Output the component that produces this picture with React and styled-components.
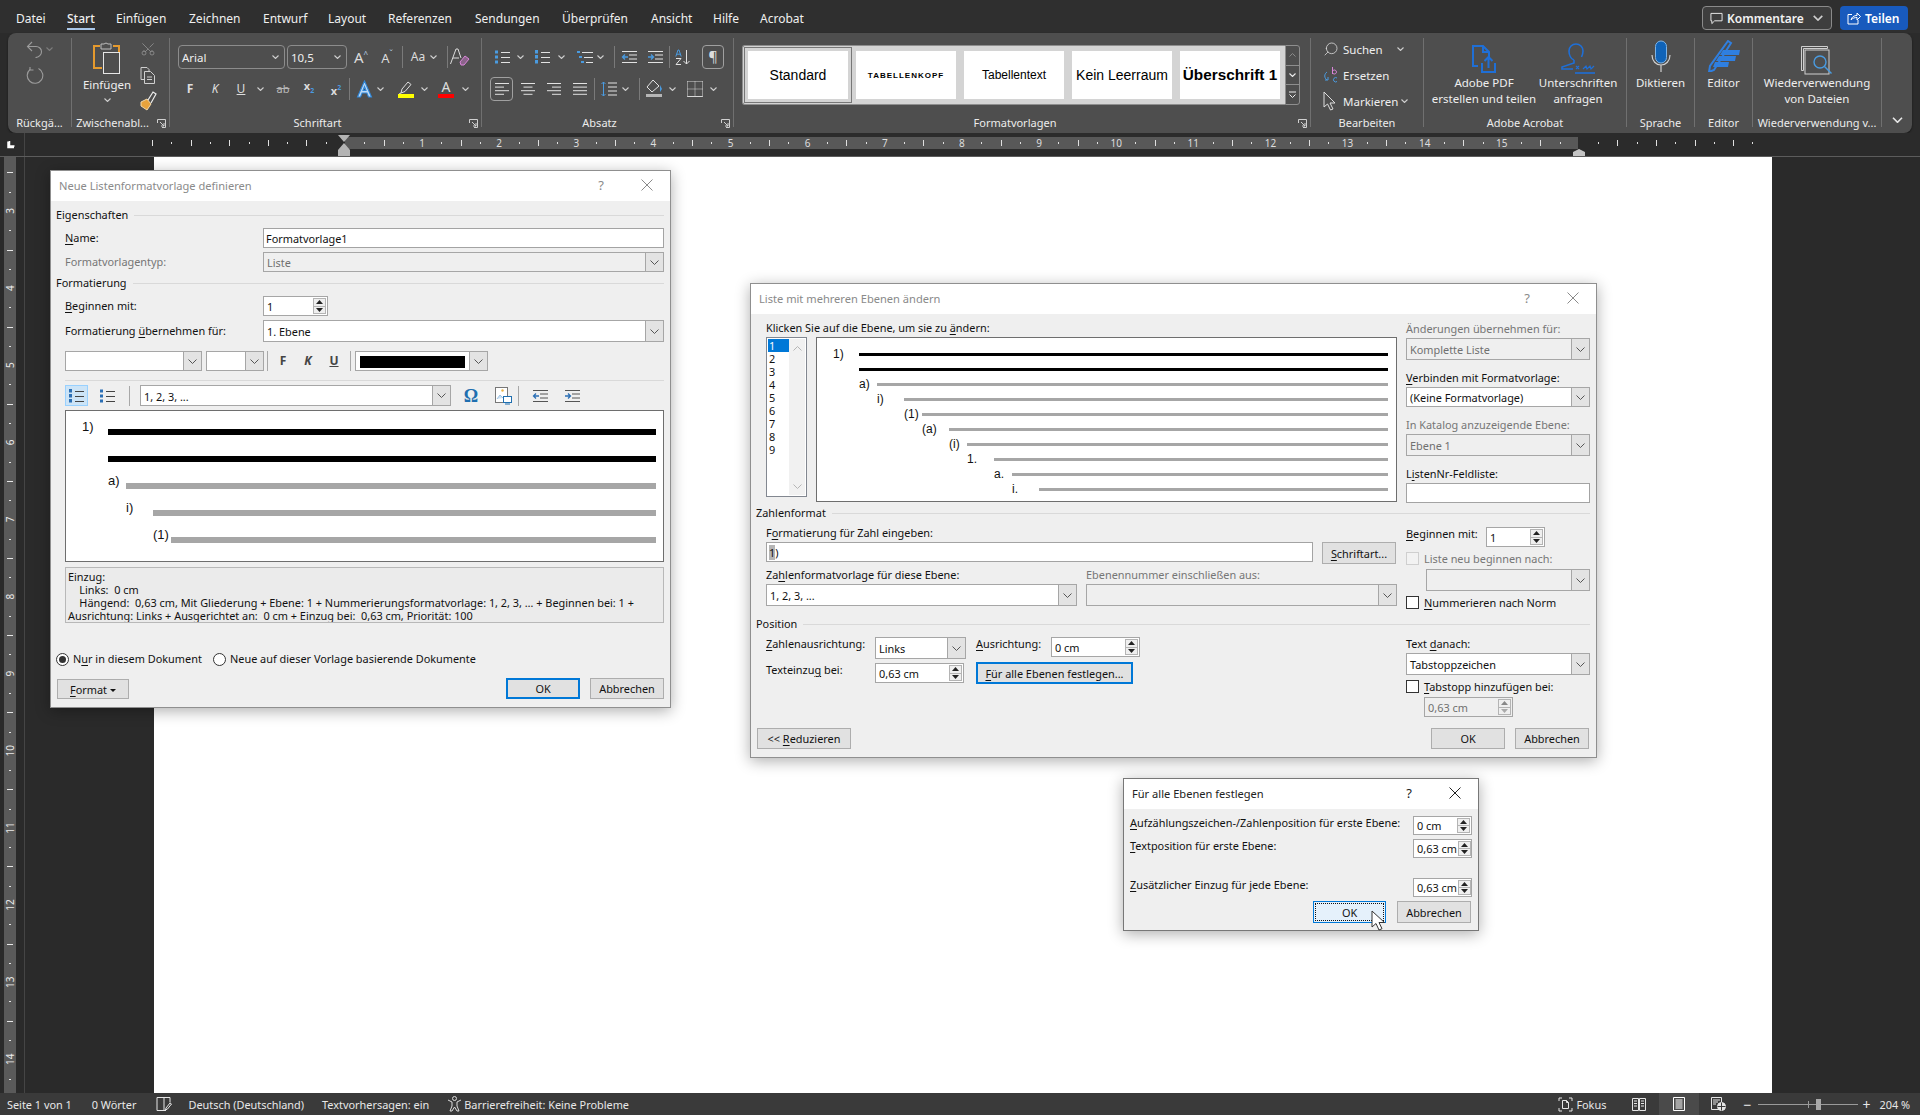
import React from 'react';
import styled, { createGlobalStyle } from 'styled-components';
import { Scissors, Search } from 'lucide-react';

const UI = '"Noto Sans", "Open Sans", "Liberation Sans", sans-serif';
const ARIAL = '"Liberation Sans", Arial, sans-serif';

const Global = createGlobalStyle`
  html, body { margin: 0; padding: 0; background: #2b2b2b; }
  * { box-sizing: border-box; }
  u { text-underline-offset: 2px; text-decoration-thickness: 1px; }
`;

const Root = styled.div`
  position: relative; width: 1920px; height: 1115px; overflow: hidden;
  display: flex; flex-direction: column; background: #2b2b2b;
  font-family: ${UI}; font-size: 11px; color: #e6e6e6;
`;

/* ---------- title tabs ---------- */
const TabBar = styled.div`
  height: 33px; flex: none; background: #2f2f2f; display: flex; align-items: flex-start; padding-left: 16px;
`;
const Tab = styled.div`
  width: ${p => p.$w}px; flex: none; padding-top: 10px; line-height: 18px; font-size: 12px; color: #f0f0f0; white-space: nowrap;
`;
const ActiveTabText = styled.span`
  display: inline-block; height: 20px; border-bottom: 2px solid #a9c7ea; font-weight: 500;
`;
const TabSpacer = styled.div`flex: 1;`;
const CommentBtn = styled.div`
  margin-top: 6px; width: 130px; height: 24px; border: 1px solid #8a8a8a; border-radius: 4px; background: #3e3e3e;
  display: flex; align-items: center; padding-left: 7px; font-size: 12px; font-weight: 600; color: #f2f2f2;
`;
const BtnText = styled.span`margin-left: 4px;`;
const BtnChev = styled.span`margin-left: 9px; display: flex;`;
const ShareBtn = styled.div`
  margin: 6px 12px 0 8px; width: 68px; height: 24px; border-radius: 4px; background: #185abd;
  display: flex; align-items: center; padding-left: 7px; font-size: 12px; font-weight: 600; color: #fff;
`;

/* ---------- ribbon ---------- */
const Ribbon = styled.div`
  height: 100px; flex: none; margin: 0 8px; width: 1904px; background: #4e4e4e; border-radius: 8px; display: flex;
  box-shadow: 0 1px 2px rgba(0,0,0,.5);
`;
const GroupSep = styled.div`width: 1px; flex: none; margin: 5px 0 6px; background: #707070;`;
const Group = styled.div`
  position: relative; width: ${p => p.$w}px; flex: none; display: flex; flex-direction: column;
`;
const GroupBody = styled.div`flex: 1; display: flex; min-height: 0;`;
const GroupLabel = styled.div`
  height: 14px; margin-bottom: 3px; padding-right: ${p => p.$pr || 0}px; line-height: 14px; text-align: center; font-size: 11px; color: #ececec; white-space: nowrap;
`;
const Launcher = styled.svg`position: absolute; right: 3px; bottom: 5px;`;
const ToolStack = styled.div`flex: 1; padding-top: 12px; display: flex; flex-direction: column; gap: 8px;`;
const ToolRow = styled.div`height: 24px; display: flex; align-items: center; padding-left: ${p => p.$pl || 0}px;`;
const Tool = styled.span`
  width: ${p => p.$w || 20}px; margin-left: ${p => p.$ml || 0}px; flex: none; height: 24px;
  display: flex; flex-direction: column; align-items: center; justify-content: center;
  font-size: ${p => p.$fs || 12}px; font-weight: ${p => p.$fw || 400}; font-style: ${p => (p.$it ? 'italic' : 'normal')};
  color: ${p => p.$c || '#dcdcdc'}; line-height: 14px;
  border: ${p => (p.$box ? '1px solid #a0a0a0' : 'none')}; border-radius: ${p => (p.$box ? '4px' : 0)};
  text-decoration: ${p => p.$deco || 'none'}; white-space: nowrap;
`;
const SizeMark = styled.span`font-size: 8px; line-height: 8px; vertical-align: 6px; color: #b9cfe6;`;
const ColorBar = styled.i`display: block; width: 16px; height: 4px; background: ${p => p.$c};`;
const RibbonCombo = styled.div`
  width: ${p => p.$w}px; margin-left: ${p => p.$ml || 0}px; height: 24px; flex: none; border: 1px solid #8c8c8c; border-radius: 4px;
  display: flex; align-items: center; justify-content: space-between; padding: 0 5px 0 3px; font-size: 11.5px; color: #eee;
`;
const RowSep = styled.i`display: block; flex: none; width: 1px; height: 22px; background: #7a7a7a; margin-left: ${p => p.$ml || 0}px;`;
const StackCol = styled.div`
  width: ${p => p.$w}px; margin-left: ${p => p.$ml || 0}px; flex: none; display: flex; flex-direction: column; align-items: center;
  padding-top: ${p => p.$pt || 0}px;
`;
const PasteLabel = styled.div`font-size: 11.5px; line-height: 16px; color: #eee; margin-top: 3px;`;
const PasteChev = styled.span`margin-top: 5px; display: flex;`;
const MiniTool = styled.div`height: 26px; display: flex; align-items: center; justify-content: center;`;
const MiniChev = styled.span`margin-left: ${p => p.$ml}px; width: ${p => p.$w || 7}px; display: flex;`;

const Gallery = styled.div`
  margin: 12px 0 0 8px; width: 543px; height: 60px; background: #d4d4d4; border: 1px solid #8e8e8e; border-right: none; border-radius: 3px 0 0 3px;
  display: flex; align-items: center; padding-left: 5px; gap: 8px;
`;
const StyleCard = styled.div`
  width: 100px; height: 48px; flex: none; background: #fff; color: #000; display: flex; align-items: center; justify-content: center;
  font-family: ${ARIAL}; white-space: nowrap;
  font-size: ${p => p.$fs || 13}px; font-weight: ${p => (p.$b ? 700 : 400)}; letter-spacing: ${p => p.$ls || 0}px;
  outline: ${p => (p.$sel ? '1px solid #777' : 'none')}; outline-offset: 3px; 
`;
const GalleryScroll = styled.div`
  margin-top: 12px; width: 15px; height: 60px; flex: none; border: 1px solid #8e8e8e; border-radius: 0 3px 3px 0;
  display: flex; flex-direction: column;
`;
const ScrollCell = styled.div`
  flex: 1; display: flex; align-items: center; justify-content: center; border-top: ${p => (p.$first ? 'none' : '1px solid #8e8e8e')};
`;
const EditRows = styled.div`padding: 3px 0 0 12px; display: flex; flex-direction: column;`;
const EditRow = styled.div`height: 26px; display: flex; align-items: center; font-size: 11.5px; color: #eee;`;
const EditText = styled.span`margin-left: ${p => p.$ml || 4}px;`;
const EditChev = styled.span`margin-left: ${p => p.$ml}px; display: flex;`;
const Big = styled.div`
  width: ${p => p.$w}px; flex: none; padding-top: 7px; display: flex; flex-direction: column; align-items: center;
`;
const BigIcon = styled.div`height: 35px; padding-top: ${p => p.$pt || 0}px; display: flex; align-items: flex-start; justify-content: center;`;
const BigText = styled.div`font-size: 11.5px; line-height: 16px; text-align: center; color: #eee; white-space: nowrap;`;
const Collapse = styled.div`flex: 1; display: flex; align-items: flex-end; justify-content: center; padding-bottom: 10px;`;

/* ---------- rulers & page ---------- */
const RulerBar = styled.div`height: 24px; flex: none; background: #2b2b2b; border-bottom: 1px solid #5c5c5c;`;
const RulerSvg = styled.svg`display: block; flex: none;`;
const Work = styled.div`flex: 1; min-height: 0; display: flex; background: #2a2a2a;`;
const SideGap = styled.div`width: 130px; flex: none; border-left: 1px solid #454545;`;
const Page = styled.div`width: 1618px; flex: none; background: #fff;`;

/* ---------- status bar ---------- */
const Status = styled.div`
  height: 22px; flex: none; background: #3a3a3a; display: flex; align-items: center; font-size: 10.9px; color: #e8e8e8; white-space: nowrap;
`;
const StatusItem = styled.span`
  margin-left: ${p => p.$ml || 0}px; margin-right: ${p => p.$mr || 0}px; flex: none; display: flex; align-items: center; font-size: ${p => (p.$fs ? `${p.$fs}px` : 'inherit')};
`;
const ViewActive = styled.span`
  margin-left: ${p => p.$ml}px; width: 40px; height: 22px; background: #4a4a4a; display: flex; align-items: center; justify-content: center; flex: none;
`;
const Slider = styled.span`
  position: relative; width: 100px; height: 1px; background: #9a9a9a; margin-left: ${p => p.$ml}px; flex: none;
  &::before { content: ''; position: absolute; left: 50px; top: -3px; width: 1px; height: 7px; background: #9a9a9a; }
  &::after { content: ''; position: absolute; left: 58px; top: -5px; width: 5px; height: 11px; background: #a8a8a8; }
`;

/* ---------- dialogs ---------- */
const Dialog = styled.div`
  position: absolute; left: ${p => p.$x}px; top: ${p => p.$y}px; width: ${p => p.$w}px; height: ${p => p.$h}px;
  background: #efefef; border: 1px solid ${p => p.$edge || '#8f8f8f'}; box-shadow: 0 3px 14px rgba(0,0,0,.32);
  font-family: ${UI}; font-size: 10.9px; color: #111; display: flex; flex-direction: column;
`;
const TitleBar = styled.div`
  height: 30px; flex: none; background: #fff; display: flex; align-items: center; padding: 0 0 2px 8px; font-size: 11.1px;
  color: ${p => (p.$active ? '#222' : '#8a8a8a')};
`;
const TitleText = styled.div`flex: 1;`;
const Help = styled.div`width: 46px; text-align: center; font-size: 13px; color: ${p => (p.$active ? '#222' : '#8a8a8a')};`;
const CloseX = styled.div`width: 46px; display: flex; justify-content: center;`;
const Section = styled.div`
  display: flex; align-items: center; height: 16px; margin: ${p => p.$mt || 0}px 6px 0 5px; line-height: 16px; white-space: nowrap;
  &::after { content: ''; flex: 1; height: 1px; background: #d9d9d9; margin-left: 6px; }
`;
const FormRow = styled.div`
  display: flex; align-items: center; margin: ${p => p.$mt || 0}px 6px 0 ${p => p.$ml ?? 14}px;
  height: ${p => (p.$h ? `${p.$h}px` : 'auto')};
`;
const Label = styled.div`
  width: ${p => (p.$w ? `${p.$w}px` : 'auto')}; flex: none; line-height: 14px; white-space: nowrap;
  margin-left: ${p => p.$ml || 0}px; margin-top: ${p => p.$mt || 0}px;
  color: ${p => (p.$off ? '#767676' : '#111')};
`;
const Divider = styled.div`height: 1px; margin: ${p => p.$mt}px 6px 0 14px; background: #d9d9d9;`;
const TextInput = styled.div`
  width: ${p => (p.$w ? `${p.$w}px` : 'auto')}; flex: ${p => (p.$w || p.$col ? 'none' : 1)}; height: ${p => p.$h || 20}px; margin-top: ${p => p.$mt || 0}px;
  background: #fff; border: 1px solid #a3a3a3; padding-left: 2px; line-height: ${p => (p.$h || 20) - 1}px;
`;
const Selected = styled.span`background: #b5b5b5;`;
const ComboBox = styled.div`
  width: ${p => (p.$w ? `${p.$w}px` : 'auto')}; flex: ${p => (p.$w || p.$col ? 'none' : 1)}; height: ${p => p.$h || 22}px;
  margin-left: ${p => p.$ml || 0}px; margin-top: ${p => p.$mt || 0}px;
  display: flex; border: 1px solid #a6a6a6; background: ${p => (p.$off ? '#efefef' : '#fff')}; color: ${p => (p.$off ? '#707070' : '#111')};
`;
const ComboValue = styled.div`flex: 1; min-width: 0; padding: 1px 0 0 3px; display: flex; align-items: center; white-space: nowrap;`;
const ComboArrow = styled.div`
  width: 18px; flex: none; background: #e3e3e3; border-left: 1px solid #a6a6a6; display: flex; align-items: center; justify-content: center;
`;
const Swatch = styled.div`flex: 1; height: 12px; background: #000; margin: 0 4px 0 1px;`;
const SpinBox = styled.div`
  width: ${p => p.$w}px; height: ${p => p.$h || 20}px; flex: none; margin-left: ${p => p.$ml || 0}px; margin-top: ${p => p.$mt || 0}px;
  display: flex; background: ${p => (p.$off ? '#efefef' : '#fff')}; border: 1px solid #a6a6a6; color: ${p => (p.$off ? '#707070' : '#111')};
`;
const SpinValue = styled.div`flex: 1; padding-left: 3px; display: flex; align-items: center; white-space: nowrap;`;
const SpinBtns = styled.div`width: 15px; flex: none; padding: 1px; display: flex; flex-direction: column;`;
const SpinBtn = styled.div`
  flex: 1; display: flex; align-items: center; justify-content: center; background: #efefef;
  border: 1px solid #b4b4b4; border-top: ${p => (p.$down ? 'none' : '1px solid #b4b4b4')};
`;
const Button = styled.div`
  width: ${p => p.$w}px; height: ${p => p.$h || 21}px; flex: none; margin-left: ${p => p.$ml || 0}px; margin-top: ${p => p.$mt || 0}px;
  display: flex; align-items: center; justify-content: center; white-space: nowrap;
  background: ${p => (p.$hot ? '#e5f1fb' : '#e1e1e1')};
  border: ${p => (p.$focus ? '2px solid #0078d7' : p.$hot ? '1px solid #0078d7' : '1px solid #adadad')};
  ${p => (p.$hot ? 'outline: 1px dotted #111; outline-offset: -3px;' : '')}
`;
const Footer = styled.div`display: flex; margin: ${p => p.$mt}px ${p => p.$mr || 6}px 0 6px;`;
const Grow = styled.div`flex: 1;`;
const Caret = styled.i`
  display: inline-block; width: 0; height: 0; margin-left: 3px; vertical-align: middle;
  border-left: 3px solid transparent; border-right: 3px solid transparent; border-top: 3px solid #111;
`;
const RadioDot = styled.span`
  width: 13px; height: 13px; flex: none; border-radius: 50%; border: 1px solid #333; background: #fff; margin-left: ${p => p.$ml || 0}px;
  display: flex; align-items: center; justify-content: center;
  &::after { content: ''; width: 7px; height: 7px; border-radius: 50%; background: ${p => (p.$on ? '#333' : 'transparent')}; }
`;
const CheckBox = styled.span`
  width: 13px; height: 13px; flex: none; border: 1px solid ${p => (p.$off ? '#cfcfcf' : '#333')}; background: ${p => (p.$off ? '#f2f2f2' : '#fff')};
`;
const HitBox = styled.span`
  width: 23px; height: 21px; flex: none; background: #cce4f7; border: 1px solid #99d1ff; display: flex; align-items: center; justify-content: center;
`;
const DlgTool = styled(Tool)`height: 21px; color: ${p => p.$c || '#444'};`;
const DlgSep = styled.i`display: block; flex: none; width: 1px; height: 20px; background: #a8a8a8; margin-left: ${p => p.$ml || 0}px;`;

const PreviewBox = styled.div`
  width: ${p => (p.$w ? `${p.$w}px` : 'auto')}; height: ${p => p.$h}px; flex: ${p => (p.$w ? 'none' : 'initial')};
  margin: ${p => p.$m || 0};
  background: #fff; border: 1px solid #6e6e6e; padding: ${p => p.$pad};
`;
const PreviewRow = styled.div`
  display: flex; align-items: flex-start; height: ${p => p.$rh}px; padding-left: ${p => p.$indent}px;
  font-family: ${ARIAL}; font-size: ${p => p.$fs}px; color: #111; line-height: 14px;
`;
const PreviewNum = styled.span`width: ${p => p.$w}px; flex: none; margin-top: ${p => p.$mt || 0}px;`;
const PreviewBar = styled.i`
  display: block; flex: 1; height: ${p => p.$h}px; margin-top: ${p => p.$mt}px; background: ${p => (p.$dark ? '#000' : '#a6a6a6')};
`;
const DescBox = styled.div`
  margin: 5px 6px 0 14px; height: 56px; border: 1px solid #b8b8b8; background: #ebebeb; padding: 2px 2px; line-height: 13px; font-size: 10.9px; white-space: pre;
  overflow: hidden;
`;
const ListBox = styled.div`
  width: 41px; height: 160px; flex: none; background: #fff; border: 1px solid #828790; display: flex; padding: 1px;
`;
const ListItems = styled.div`width: 21px; flex: none; display: flex; flex-direction: column;`;
const ListItem = styled.div`
  height: 13px; line-height: 13px; padding-left: 1px; background: ${p => (p.$sel ? '#0078d7' : 'transparent')}; color: ${p => (p.$sel ? '#fff' : '#111')};
`;
const ListScroll = styled.div`
  flex: 1; background: #f1f1f1; display: flex; flex-direction: column; align-items: center; justify-content: space-between; padding: 7px 0 6px;
`;
const Columns = styled.div`display: flex; height: ${p => p.$h}px; flex: none;`;
const LeftCol = styled.div`width: 631px; margin-left: 15px; flex: none; display: flex; flex-direction: column;`;
const RightCol = styled.div`width: 184px; margin-left: 9px; flex: none; display: flex; flex-direction: column;`;
const ColLabel = styled.div`
  height: 16px; line-height: 16px; margin-top: ${p => p.$mt || 0}px; white-space: nowrap; width: ${p => (p.$w ? `${p.$w}px` : 'auto')};
  color: ${p => (p.$off ? '#767676' : '#111')};
`;
const InlineRow = styled.div`display: flex; align-items: flex-start; margin-top: ${p => p.$mt || 0}px; margin-left: ${p => p.$ml || 0}px;`;
const CheckRow = styled.div`display: flex; align-items: center; height: 16px; margin-top: ${p => p.$mt || 0}px; color: ${p => (p.$off ? '#767676' : '#111')};`;
const CheckText = styled.span`margin-left: 5px; white-space: nowrap;`;
const SetRow = styled.div`
  display: flex; justify-content: space-between; align-items: flex-start; margin: ${p => p.$mt}px 6px 0 6px;
`;
const SetFooter = styled.div`display: flex; justify-content: flex-end; margin: 4px 7px 0 0;`;
const CursorMark = styled.svg`position: absolute; left: 247px; top: 131px;`;
const MirroredSearch = styled(Search)`transform: scaleX(-1); flex: none;`;
const TurnedScissors = styled(Scissors)`transform: rotate(-90deg);`;

/* ---------- icons ---------- */
const Chev = ({ c = '#cfcfcf', w = 7, h = 4 }) => (
  <svg width={w} height={h} viewBox="0 0 7 4"><path d="M.5.5 3.5 3.5 6.5.5" fill="none" stroke={c} strokeWidth="1.1" /></svg>
);
const ComboChev = () => (
  <svg width="9" height="5" viewBox="0 0 9 5"><path d="M.5.5 4.500 4.500 8.500.5" fill="none" stroke="#555" /></svg>
);
const Tri = ({ up, c = '#222' }) => (
  <svg width="7" height="4" viewBox="0 0 7 4"><path d={up ? 'M3.5 0 7 4H0z' : 'M0 0h7L3.5 4z'} fill={c} /></svg>
);
const LauncherIcon = () => (
  <Launcher width="9" height="9" viewBox="0 0 9 9" fill="none" stroke="#d0d0d0"><path d="M.5 4V.5h8v8H5" /><path d="M3 3l4 4M7 4v3H4" /></Launcher>
);
const UndoIcon = () => (
  <svg width="17" height="17" viewBox="0 0 17 17" fill="none" stroke="#9c9c9c" strokeWidth="1.1">
    <path d="M6 1 1.500 5.500 6 10" /><path d="M1.500 5.500H10c3 0 5.500 2.200 5.500 5.200S13 16.500 9.500 16.500" />
  </svg>
);
const RedoIcon = () => (
  <svg width="18" height="18" viewBox="0 0 18 18" fill="none" stroke="#9c9c9c" strokeWidth="1.1">
    <path d="M12.500 2.500A7.800 7.800 0 1 1 4 3.500" /><path d="M4 1v3h3.500" />
  </svg>
);
const Lines = ({ t }) => {
  const rows = {
    left: [[1, 14], [1, 9], [1, 14], [1, 9]],
    center: [[1, 14], [3.5, 9], [1, 14], [3.5, 9]],
    right: [[1, 14], [6, 9], [1, 14], [6, 9]],
    just: [[1, 14], [1, 14], [1, 14], [1, 14]],
  }[t];
  return (
    <svg width="16" height="14" viewBox="0 0 16 14" stroke="#e2e2e2">
      {rows.map(([x, w], i) => <path key={i} d={`M${x} ${1.5 + i * 3.6}h${w}`} />)}
    </svg>
  );
};
const ListGlyph = ({ kind, dark }) => {
  const line = dark ? '#444' : '#e2e2e2';
  const blue = dark ? '#2b6fb5' : '#4a9be0';
  return (
    <svg width="17" height="14" viewBox="0 0 17 14">
      {[2, 7, 12].map((y, i) => (
        <g key={y}>
          {kind === 'multi' ? (
            <rect x={i * 2} y={y - 1} width="3" height="2" fill={blue} />
          ) : kind === 'num' ? (
            <rect x="1" y={y - 2} width="3" height="3.5" fill={blue} />
          ) : (
            <rect x="1" y={y - 1.5} width="3" height="3" fill={blue} />
          )}
          <path d={`M${kind === 'multi' ? 5 + i * 2 : 7} ${y + 0.5}H16`} stroke={line} />
        </g>
      ))}
    </svg>
  );
};
const IndentGlyph = ({ out, dark }) => {
  const l = dark ? '#555' : '#e2e2e2';
  const a = dark ? '#2b6fb5' : '#4a9be0';
  return (
    <svg width="17" height="14" viewBox="0 0 17 14" fill="none">
      <path d="M1 1.5h15M8 5h8M8 9h8M1 12.5h15" stroke={l} />
      <path d={out ? 'M7 7H1.5M4 4.5 1.5 7 4 9.5' : 'M1 7h5.5M4 4.500 6.500 7 4 9.500'} stroke={a} strokeWidth="1.3" />
    </svg>
  );
};
const ClipboardIcon = () => (
  <svg width="30" height="32" viewBox="0 0 30 32" fill="none">
    <path d="M8 4H2v22h8" stroke="#e59a2e" strokeWidth="2" />
    <path d="M21 4h6v6" stroke="#e59a2e" strokeWidth="2" />
    <path d="M9 4V2h3l2-1 2 1h3v5H9z" stroke="#bdbdbd" />
    <rect x="11.5" y="10.5" width="16" height="21" stroke="#e6e6e6" fill="#4e4e4e" />
  </svg>
);
const CopyIcon = () => (
  <svg width="16" height="17" viewBox="0 0 16 17" fill="none" stroke="#cfcfcf">
    <path d="M1 .5h6l2 2V4" /><path d="M1 .5v12h3" />
    <path d="M4.5 4.5h6l4 4v8h-10z" /><path d="M7 10h5M7 12.5h5" />
  </svg>
);
const BrushIcon = () => (
  <svg width="17" height="20" viewBox="0 0 17 20" fill="none">
    <path d="M1 11l6-3 4 5-4 6-6-4z" fill="#e8a33c" stroke="#f2d8a8" />
    <path d="M8 9l5-8 3 2-5 9" stroke="#ededed" strokeWidth="1.2" />
  </svg>
);
const ClearFmt = () => (
  <svg width="22" height="20" viewBox="0 0 22 20" fill="none">
    <path d="M1.500 17 7 2h2l3 9M4 11h6" stroke="#dcdcdc" />
    <path d="M11 15l5-6 4 3-5 6h-3z" stroke="#d985d9" fill="#c879c8" fillOpacity=".5" />
  </svg>
);
const OutlineA = () => (
  <svg width="17" height="18" viewBox="0 0 17 18">
    <path d="M8.5 1 15.5 17h-3l-1.6-4H6.1l-1.6 4h-3zM7 10.5h3L8.5 6.5z" fill="#bcd9f5" stroke="#2f86d8" strokeWidth="1.1" />
  </svg>
);
const Marker = () => (
  <svg width="16" height="13" viewBox="0 0 16 13" fill="none" stroke="#e0e0e0"><path d="M3 12l1-4 6-7 3 2.5-6 7zM3 12l-2 1" /></svg>
);
const ShadeIcon = () => (
  <svg width="18" height="20" viewBox="0 0 18 20" fill="none">
    <path d="M8 1 2 8l5 5 7-6z" stroke="#e2e2e2" /><path d="M15 6l2 4-2 3z" fill="#4a9be0" />
    <rect x="1" y="15" width="16" height="3" fill="#b5b5b5" />
  </svg>
);
const BorderIcon = () => (
  <svg width="16" height="16" viewBox="0 0 16 16" fill="none" stroke="#d8d8d8" strokeDasharray="1 1">
    <path d="M.5.5h15M.5 15.5h15M.5.5v15M15.5.5v15M8 .5v15M.5 8h15" /><path d="M.5 15.5h15" strokeDasharray="none" />
  </svg>
);
const SortIcon = () => (
  <svg width="17" height="17" viewBox="0 0 17 17" fill="none">
    <path d="M.8 7.500 3 1h1l2.200 6.500M1.600 5.200h3.800" stroke="#4a9be0" />
    <path d="M1 9.500h5L1 15.500h5" stroke="#e2e2e2" />
    <path d="M11.500 1v14M8.500 12l3 3 3-3" stroke="#e2e2e2" />
  </svg>
);
const LineSpaceIcon = () => (
  <svg width="16" height="16" viewBox="0 0 16 16" fill="none"><path d="M2.5 1v14M.5 3l2-2 2 2M.5 13l2 2 2-2" stroke="#4a9be0" /><path d="M7 2h9M7 6h9M7 10h9M7 14h9" stroke="#e2e2e2" /></svg>
);
const ReplaceIcon = () => (
  <svg width="16" height="18" viewBox="0 0 16 18" fill="none">
    <path d="M9.500 1v7M9.500 5.500a2 2 0 1 1 0 1" stroke="#d985d9" />
    <path d="M14 12a2.200 2.200 0 1 0 0 3.500" stroke="#4a9be0" />
    <path d="M4 6C1 8 1 12 4 14M2 14h3v-3" stroke="#4a9be0" />
  </svg>
);
const ArrowIcon = ({ c = '#dcdcdc', fill = 'none' }) => (
  <svg width="14" height="20" viewBox="0 0 14 20" fill={fill} stroke={c}><path d="M1 1v15l3.5-3 3 6 2.5-1-3-6h5z" /></svg>
);
const PdfIcon = () => (
  <svg width="26" height="30" viewBox="0 0 26 30" fill="none" stroke="#1f6fd6" strokeWidth="2">
    <path d="M7 22H2V2h10l6 6v5" /><path d="M12 2v6h6" />
    <path d="M11 19v9h13v-9M17.5 24V13M13.5 17l4-4 4 4" />
  </svg>
);
const SignIcon = () => (
  <svg width="36" height="32" viewBox="0 0 36 32" fill="none" stroke="#1f6fd6" strokeWidth="1.6">
    <path d="M14 18c-3-1-5-5-5-9 0-4 3-7 7-7s7 3 7 7c0 2-.6 4-1.5 6M14 18v3L2 25v2h11" />
    <path d="M16 24l3 3m0-3-3 3M23 27l3-3 1 3 3-3 1 3 3-3" strokeWidth="1.2" />
    <path d="M15 31h20" />
  </svg>
);
const MicIcon = () => (
  <svg width="20" height="32" viewBox="0 0 20 32" fill="none">
    <rect x="4.5" y="1" width="11" height="22" rx="5.5" fill="#0f63b8" stroke="#7db3e6" />
    <path d="M1 15c0 6 4 10 9 10s9-4 9-10M10 25v7" stroke="#cfcfcf" strokeWidth="1.2" />
  </svg>
);
const PenIcon = () => (
  <svg width="32" height="32" viewBox="0 0 32 32">
    <path d="M20 1l3 2L6 30l-5 2 1-6z" fill="none" stroke="#2f7fe0" strokeWidth="2" />
    <path d="M15 10h17l-1 5H12zM11 16h17l-1 5H8zM7 22h14l-1 5H5z" fill="#2f7fe0" />
  </svg>
);
const ReuseIcon = () => (
  <svg width="32" height="32" viewBox="0 0 32 32" fill="none">
    <path d="M.5 1.5h26v2h-24v22h-2z" stroke="#cfcfcf" />
    <rect x="4" y="5" width="24" height="24" stroke="#cfcfcf" />
    <circle cx="19" cy="17" r="6" stroke="#4a9be0" strokeWidth="1.4" />
    <path d="M23.5 21.5l7 7" stroke="#4a9be0" strokeWidth="1.4" />
  </svg>
);
const CommentIcon = ({ s = 13 }) => (
  <svg width={s} height={s} viewBox="0 0 14 14" fill="none" stroke="#f2f2f2"><path d="M1 1.5h12v8H5l-3 3v-3H1z" /></svg>
);
const ShareIcon = () => (
  <svg width="14" height="14" viewBox="0 0 14 14" fill="none" stroke="#fff"><path d="M5 3.5H1v9.500h10V9" /><path d="M4 9c.5-3 3-4.500 6-4.500V2l3.500 3.500L10 9V6.500C8 6.500 5.500 7 4 9z" /></svg>
);
const XIcon = ({ c }) => (
  <svg width="12" height="12" viewBox="0 0 12 12" stroke={c} fill="none"><path d="M.5.5l11 11M11.5.5l-11 11" /></svg>
);
const OmegaText = styled.span`font-family: "Liberation Serif", serif; font-weight: 700; font-size: 18px; color: #1f6fb0;`;
const PicSym = () => (
  <svg width="17" height="18" viewBox="0 0 17 18" fill="none">
    <rect x=".5" y=".5" width="12" height="15" stroke="#777" fill="#fff" />
    <circle cx="7.5" cy="3.5" r="1.2" fill="#e8b34a" />
    <path d="M2 12l3-4 3 3" stroke="#9cc3e6" fill="#cfe2f3" />
    <rect x="8.5" y="9.5" width="8" height="6" fill="#fff" stroke="#1f6fb0" />
    <path d="M10 17h5" stroke="#1f6fb0" />
  </svg>
);
const DocEdit = () => (
  <svg width="16" height="15" viewBox="0 0 16 15" fill="none" stroke="#e6e6e6"><path d="M1 .5h7v13H1zM8 .5h6v5M8 13.500h2" /><path d="M10 11l4-5 1.500 1-4 5-2 1z" /></svg>
);
const Person = () => (
  <svg width="15" height="16" viewBox="0 0 15 16" fill="none" stroke="#dcdcdc"><circle cx="7.5" cy="2.5" r="2" /><path d="M1 4l4 2v4l-2 5h2l2.500-4 2.500 4h2l-2-5V6l4-2" /></svg>
);
const FocusIcon = () => (
  <svg width="15" height="15" viewBox="0 0 15 15" fill="none" stroke="#e6e6e6"><path d="M1 4V1h3M11 1h3v3M1 11v3h3M11 14h3v-3" /><path d="M4.500 3.500h4l2 2v6h-6zM8.500 3.500v2h2" /></svg>
);
const BookIcon = () => (
  <svg width="14" height="13" viewBox="0 0 14 13" fill="none" stroke="#e6e6e6"><path d="M.5.5h6v12h-6zM7.500.5h6v12h-6zM2 3h3M2 5.500h3M2 8h3M9 3h3M9 5.500h3M9 8h3" /></svg>
);
const PrintIcon = () => (
  <svg width="12" height="14" viewBox="0 0 12 14" fill="none" stroke="#fff"><path d="M.5.5h11v13H.5zM2.500 3h7M2.500 5h7M2.500 7h7M2.500 9h7M2.500 11h7" /></svg>
);
const WebIcon = () => (
  <svg width="15" height="14" viewBox="0 0 15 14" fill="none" stroke="#e6e6e6">
    <path d="M.5.5h10v12H.5zM2 3h7M2 5h5M2 7h3" />
    <circle cx="10.5" cy="9.5" r="4" fill="#e6e6e6" /><path d="M6.500 9.500h8M10.500 5.500v8" stroke="#3a3a3a" />
  </svg>
);

/* ---------- rulers ---------- */
const HRuler = () => {
  const marks = [];
  for (let k = -10; k <= 73; k++) {
    const x = 345 + 19.28 * k;
    const lab = k > 0 && k % 4 === 0 && k <= 60 ? k / 4 : null;
    if (k === 0 || k === 64) continue;
    if (lab) marks.push(<text key={k} x={x} y="14" fontSize="10" textAnchor="middle" fill="#dedede" fontFamily="Noto Sans">{lab}</text>);
    else if (k % 2 !== 0) marks.push(<rect key={k} x={Math.round(x)} y="9" width="1" height="2" fill="#e0e0e0" />);
    else marks.push(<rect key={k} x={Math.round(x)} y="7" width="1" height="6" fill="#e0e0e0" />);
  }
  return (
    <RulerSvg width="1920" height="23">
      <path d="M24.5 0v23" stroke="#454545" />
      <path d="M8 8.500v6h6M9.500 8v5h5" fill="none" stroke="#fff" strokeWidth="1.5" />
      <rect x="345" y="4" width="1233" height="12" fill="#585858" />
      {marks}
      <path d="M338 2h12l-6 7zM338 17l6-7 6 7zM338 17h12v6h-12z" fill="#b4b4b4" />
      <path d="M1579 16l-6 3v4h12v-4z" fill="#c4c4c4" />
    </RulerSvg>
  );
};
const VRuler = () => {
  const marks = [];
  for (let k = 0; k < 60; k++) {
    const y = -20.4 + 19.28 * k - 157;
    if (y < 2 || y > 936) continue;
    const lab = k % 4 === 0 ? k / 4 : null;
    if (lab) marks.push(<text key={k} x="10" y={y} fontSize="10" textAnchor="middle" dominantBaseline="central" fill="#eaeaea" fontFamily="Noto Sans" transform={`rotate(-90 10 ${y})`}>{lab}</text>);
    else if (k % 2 !== 0) marks.push(<rect key={k} x="9" y={Math.round(y)} width="2" height="1" fill="#e8e8e8" />);
    else marks.push(<rect key={k} x="7" y={Math.round(y)} width="6" height="1" fill="#e8e8e8" />);
  }
  return (
    <RulerSvg width="24" height="936">
      <rect x="4" y="0" width="12" height="936" fill="#5a5a5a" />
      {marks}
    </RulerSvg>
  );
};

/* ---------- dialog helpers ---------- */
const Combo = ({ children, ...p }) => (
  <ComboBox {...p}><ComboValue>{children}</ComboValue><ComboArrow><ComboChev /></ComboArrow></ComboBox>
);
const Spin = ({ value, ...p }) => (
  <SpinBox {...p}>
    <SpinValue>{value}</SpinValue>
    <SpinBtns>
      <SpinBtn><Tri up c={p.$off ? '#888' : '#222'} /></SpinBtn>
      <SpinBtn $down><Tri c={p.$off ? '#aaa' : '#222'} /></SpinBtn>
    </SpinBtns>
  </SpinBox>
);
const Title = ({ text, active }) => (
  <TitleBar $active={active}>
    <TitleText>{text}</TitleText>
    <Help $active={active}>?</Help>
    <CloseX><XIcon c={active ? '#222' : '#8a8a8a'} /></CloseX>
  </TitleBar>
);

const tabs = [['Datei', 51], ['Start', 49], ['Einfügen', 73], ['Zeichnen', 74], ['Entwurf', 65], ['Layout', 60], ['Referenzen', 87], ['Sendungen', 87], ['Überprüfen', 89], ['Ansicht', 62], ['Hilfe', 47], ['Acrobat', 60]];

const level2 = [
  ['1)', 16, 26, true], ['', 42, 0, true], ['a)', 42, 18], ['i)', 60, 27], ['(1)', 87, 18],
  ['(a)', 105, 27], ['(i)', 132, 18], ['1.', 150, 27], ['a.', 177, 18], ['i.', 195, 27],
];

export default function App() {
  return (
    <Root>
      <Global />
      <TabBar>
        {tabs.map(([t, w]) => <Tab key={t} $w={w}>{t === 'Start' ? <ActiveTabText>{t}</ActiveTabText> : t}</Tab>)}
        <TabSpacer />
        <CommentBtn><CommentIcon /><BtnText>Kommentare</BtnText><BtnChev><Chev w={10} h={6} /></BtnChev></CommentBtn>
        <ShareBtn><ShareIcon /><BtnText>Teilen</BtnText></ShareBtn>
      </TabBar>

      <Ribbon>
        <Group $w={63}>
          <GroupBody>
            <StackCol $w={63} $pt={3}>
              <MiniTool><UndoIcon /><MiniChev $ml={3}><Chev c="#7d7d7d" /></MiniChev></MiniTool>
              <MiniTool><RedoIcon /><MiniChev $ml={3} /></MiniTool>
            </StackCol>
          </GroupBody>
          <GroupLabel>Rückgä...</GroupLabel>
        </Group>
        <GroupSep />
        <Group $w={97}>
          <GroupBody>
            <StackCol $w={60} $ml={5} $pt={9}>
              <ClipboardIcon />
              <PasteLabel>Einfügen</PasteLabel>
              <PasteChev><Chev /></PasteChev>
            </StackCol>
            <StackCol $w={20} $ml={1} $pt={3}>
              <MiniTool><TurnedScissors size={16} color="#9a9a9a" strokeWidth={1.1} /></MiniTool>
              <MiniTool><CopyIcon /></MiniTool>
              <MiniTool><BrushIcon /></MiniTool>
            </StackCol>
          </GroupBody>
          <GroupLabel $pr={16}>Zwischenabl...</GroupLabel>
          <LauncherIcon />
        </Group>
        <GroupSep />
        <Group $w={311}>
          <GroupBody>
            <ToolStack>
              <ToolRow $pl={8}>
                <RibbonCombo $w={107}><span>Arial</span><Chev /></RibbonCombo>
                <RibbonCombo $w={60} $ml={2}><span>10,5</span><Chev /></RibbonCombo>
                <Tool $ml={4} $fs={15}><span>A<SizeMark>^</SizeMark></span></Tool>
                <Tool $ml={6} $fs={13}><span>A<SizeMark>ˇ</SizeMark></span></Tool>
                <RowSep $ml={5} />
                <Tool $ml={5} $fs={12}>Aa</Tool>
                <Tool $w={10}><Chev /></Tool>
                <RowSep $ml={9} />
                <Tool $ml={2}><ClearFmt /></Tool>
              </ToolRow>
              <ToolRow $pl={8}>
                <Tool $ml={2} $fw={700} $fs={12}>F</Tool>
                <Tool $ml={5} $it $fs={12}>K</Tool>
                <Tool $ml={6} $deco="underline" $fs={12}>U</Tool>
                <Tool $w={10} $ml={4}><Chev /></Tool>
                <Tool $ml={8} $deco="line-through" $c="#b8b8b8" $fs={11}>ab</Tool>
                <Tool $ml={6} $fw={700} $fs={11}><span>x<sub style={{ color: '#4a9be0', fontSize: 7 }}>2</sub></span></Tool>
                <Tool $ml={7} $fw={700} $fs={11}><span>x<sup style={{ color: '#4a9be0', fontSize: 7 }}>2</sup></span></Tool>
                <RowSep $ml={3} />
                <Tool $ml={4}><OutlineA /></Tool>
                <Tool $w={10} $ml={1}><Chev /></Tool>
                <Tool $ml={11}><Marker /><ColorBar $c="#ffff00" /></Tool>
                <Tool $w={10} $ml={3}><Chev /></Tool>
                <Tool $ml={7} $fs={14}>A<ColorBar $c="#ff0000" /></Tool>
                <Tool $w={10} $ml={4}><Chev /></Tool>
              </ToolRow>
            </ToolStack>
          </GroupBody>
          <GroupLabel $pr={16}>Schriftart</GroupLabel>
          <LauncherIcon />
        </Group>
        <GroupSep />
        <Group $w={251}>
          <GroupBody>
            <ToolStack>
              <ToolRow>
                <Tool $ml={10}><ListGlyph kind="bullet" /></Tool>
                <Tool $w={10} $ml={3}><Chev /></Tool>
                <Tool $ml={7}><ListGlyph kind="num" /></Tool>
                <Tool $w={10} $ml={4}><Chev /></Tool>
                <Tool $ml={9}><ListGlyph kind="multi" /></Tool>
                <Tool $w={10}><Chev /></Tool>
                <RowSep $ml={9} />
                <Tool $ml={4}><IndentGlyph out /></Tool>
                <Tool $ml={6}><IndentGlyph /></Tool>
                <RowSep $ml={4} />
                <Tool $ml={3}><SortIcon /></Tool>
                <Tool $w={22} $ml={9} $box $fs={14}>¶</Tool>
              </ToolRow>
              <ToolRow>
                <Tool $w={23} $ml={8} $box><Lines t="left" /></Tool>
                <Tool $ml={5}><Lines t="center" /></Tool>
                <Tool $ml={6}><Lines t="right" /></Tool>
                <Tool $ml={6}><Lines t="just" /></Tool>
                <RowSep $ml={4} />
                <Tool $ml={4}><LineSpaceIcon /></Tool>
                <Tool $w={10} $ml={1}><Chev /></Tool>
                <RowSep $ml={9} />
                <Tool $ml={4}><ShadeIcon /></Tool>
                <Tool $w={10} $ml={3}><Chev /></Tool>
                <Tool $ml={8}><BorderIcon /></Tool>
                <Tool $w={10} $ml={3}><Chev /></Tool>
              </ToolRow>
            </ToolStack>
          </GroupBody>
          <GroupLabel $pr={16}>Absatz</GroupLabel>
          <LauncherIcon />
        </Group>
        <GroupSep />
        <Group $w={576}>
          <GroupBody>
            <Gallery>
              <StyleCard $sel $fs={14}>Standard</StyleCard>
              <StyleCard $fs={8} $b $ls={1}>TABELLENKOPF</StyleCard>
              <StyleCard $fs={12}>Tabellentext</StyleCard>
              <StyleCard $fs={14}>Kein Leerraum</StyleCard>
              <StyleCard $fs={15.3} $b>Überschrift 1</StyleCard>
            </Gallery>
            <GalleryScroll>
              <ScrollCell $first><svg width="7" height="4" viewBox="0 0 7 4"><path d="M.5 3.5 3.5.5l3 3" fill="none" stroke="#8a8a8a" /></svg></ScrollCell>
              <ScrollCell><Chev c="#eee" /></ScrollCell>
              <ScrollCell><svg width="7" height="7" viewBox="0 0 7 7" fill="none" stroke="#eee"><path d="M0 1h7M.5 3.5l3 3 3-3" /></svg></ScrollCell>
            </GalleryScroll>
          </GroupBody>
          <GroupLabel $pr={14}>Formatvorlagen</GroupLabel>
          <LauncherIcon />
        </Group>
        <GroupSep />
        <Group $w={112}>
          <GroupBody>
            <EditRows>
              <EditRow><MirroredSearch size={16} color="#dcdcdc" strokeWidth={1.2} /><EditText>Suchen</EditText><EditChev $ml={14}><Chev /></EditChev></EditRow>
              <EditRow><ReplaceIcon /><EditText>Ersetzen</EditText></EditRow>
              <EditRow><ArrowIcon /><EditText $ml={6}>Markieren</EditText><EditChev $ml={3}><Chev /></EditChev></EditRow>
            </EditRows>
          </GroupBody>
          <GroupLabel>Bearbeiten</GroupLabel>
        </Group>
        <GroupSep />
        <Group $w={202}>
          <GroupBody>
            <Big $w={120}><BigIcon $pt={4}><PdfIcon /></BigIcon><BigText>Adobe PDF<br />erstellen und teilen</BigText></Big>
            <Big $w={68}><BigIcon $pt={2}><SignIcon /></BigIcon><BigText>Unterschriften<br />anfragen</BigText></Big>
          </GroupBody>
          <GroupLabel>Adobe Acrobat</GroupLabel>
        </Group>
        <GroupSep />
        <Group $w={67}>
          <GroupBody><Big $w={67}><BigIcon><MicIcon /></BigIcon><BigText>Diktieren</BigText></Big></GroupBody>
          <GroupLabel>Sprache</GroupLabel>
        </Group>
        <GroupSep />
        <Group $w={57}>
          <GroupBody><Big $w={57}><BigIcon><PenIcon /></BigIcon><BigText>Editor</BigText></Big></GroupBody>
          <GroupLabel>Editor</GroupLabel>
        </Group>
        <GroupSep />
        <Group $w={128}>
          <GroupBody><Big $w={128}><BigIcon $pt={5}><ReuseIcon /></BigIcon><BigText>Wiederverwendung<br />von Dateien</BigText></Big></GroupBody>
          <GroupLabel>Wiederverwendung v...</GroupLabel>
        </Group>
        <GroupSep />
        <Collapse><Chev w={11} h={6} c="#e6e6e6" /></Collapse>
      </Ribbon>

      <RulerBar><HRuler /></RulerBar>

      <Work>
        <VRuler />
        <SideGap />
        <Page />
      </Work>

      <Status>
        <StatusItem $ml={7}>Seite 1 von 1</StatusItem>
        <StatusItem $ml={20}>0 Wörter</StatusItem>
        <StatusItem $ml={20}><DocEdit /></StatusItem>
        <StatusItem $ml={16}>Deutsch (Deutschland)</StatusItem>
        <StatusItem $ml={18}>Textvorhersagen: ein</StatusItem>
        <StatusItem $ml={18}><Person /></StatusItem>
        <StatusItem $ml={2}>Barrierefreiheit: Keine Probleme</StatusItem>
        <Grow />
        <StatusItem><FocusIcon /></StatusItem>
        <StatusItem $ml={3}>Fokus</StatusItem>
        <StatusItem $ml={26}><BookIcon /></StatusItem>
        <ViewActive $ml={13}><PrintIcon /></ViewActive>
        <StatusItem $ml={12}><WebIcon /></StatusItem>
        <StatusItem $ml={17} $fs={14}>−</StatusItem>
        <Slider $ml={7} />
        <StatusItem $ml={4} $fs={14}>+</StatusItem>
        <StatusItem $ml={9} $mr={10}>204 %</StatusItem>
      </Status>

      {/* dialog 1 */}
      <Dialog $x={50} $y={170} $w={621} $h={538}>
        <Title text="Neue Listenformatvorlage definieren" />
        <Section $mt={6}>Eigenschaften</Section>
        <FormRow $mt={5}><Label $w={198}><u>N</u>ame:</Label><TextInput $h={20}>Formatvorlage1</TextInput></FormRow>
        <FormRow $mt={4}><Label $w={198} $off>Formatvorlagentyp:</Label><Combo $h={20} $off>Liste</Combo></FormRow>
        <Section $mt={3}>Formatierung</Section>
        <FormRow $mt={5}><Label $w={198}><u>B</u>eginnen mit:</Label><Spin $w={65} value="1" /></FormRow>
        <FormRow $mt={4}><Label $w={198}>Formatierung <u>ü</u>bernehmen für:</Label><Combo>1. Ebene</Combo></FormRow>
        <FormRow $mt={9} $h={20}>
          <Combo $w={137} $h={20} />
          <Combo $w={58} $h={20} $ml={4} />
          <DlgSep $ml={3} />
          <DlgTool $ml={5} $fw={700}>F</DlgTool>
          <DlgTool $ml={5} $fw={700} $it>K</DlgTool>
          <DlgTool $ml={6} $fw={700} $deco="underline">U</DlgTool>
          <DlgSep $ml={6} />
          <Combo $w={133} $h={20} $ml={4}><Swatch /></Combo>
        </FormRow>
        <Divider $mt={9} />
        <FormRow $mt={4} $h={21}>
          <HitBox><ListGlyph kind="num" dark /></HitBox>
          <DlgTool $ml={9}><ListGlyph kind="bullet" dark /></DlgTool>
          <DlgSep $ml={12} />
          <Combo $w={311} $h={21} $ml={10}>1, 2, 3, ...</Combo>
          <DlgTool $ml={10}><OmegaText>Ω</OmegaText></DlgTool>
          <DlgTool $ml={12}><PicSym /></DlgTool>
          <DlgSep $ml={5} />
          <DlgTool $ml={11}><IndentGlyph out dark /></DlgTool>
          <DlgTool $ml={12}><IndentGlyph dark /></DlgTool>
        </FormRow>
        <PreviewBox $h={152} $m="4px 6px 0 14px" $pad="8px 7px 0 0">
          <PreviewRow $rh={27} $indent={16} $fs={13}><PreviewNum $w={26} $mt={1}>1)</PreviewNum><PreviewBar $h={6} $mt={10} $dark /></PreviewRow>
          <PreviewRow $rh={27} $indent={42} $fs={13}><PreviewBar $h={6} $mt={10} $dark /></PreviewRow>
          <PreviewRow $rh={27} $indent={42} $fs={13}><PreviewNum $w={18} $mt={1}>a)</PreviewNum><PreviewBar $h={6} $mt={10} /></PreviewRow>
          <PreviewRow $rh={27} $indent={60} $fs={13}><PreviewNum $w={27} $mt={1}>i)</PreviewNum><PreviewBar $h={6} $mt={10} /></PreviewRow>
          <PreviewRow $rh={27} $indent={87} $fs={13}><PreviewNum $w={18} $mt={1}>(1)</PreviewNum><PreviewBar $h={6} $mt={10} /></PreviewRow>
        </PreviewBox>
        <DescBox>{'Einzug:\n    Links:  0 cm\n    Hängend:  0,63 cm, Mit Gliederung + Ebene: 1 + Nummerierungsformatvorlage: 1, 2, 3, … + Beginnen bei: 1 +\nAusrichtung: Links + Ausgerichtet an:  0 cm + Einzug bei:  0,63 cm, Priorität: 100'}</DescBox>
        <FormRow $mt={28} $ml={5} $h={16}>
          <RadioDot $on />
          <Label $w={140} $ml={4}>N<u>u</u>r in diesem Dokument</Label>
          <RadioDot />
          <Label $ml={4}>Neue auf dieser Vorlage basierende Dokumente</Label>
        </FormRow>
        <Footer $mt={11}>
          <Button $w={72} $h={20} $mt={1}><span><u>F</u>ormat<Caret /></span></Button>
          <Grow />
          <Button $w={74} $focus>OK</Button>
          <Button $w={74} $ml={10}>Abbrechen</Button>
        </Footer>
      </Dialog>

      {/* dialog 2 */}
      <Dialog $x={750} $y={283} $w={847} $h={475}>
        <Title text="Liste mit mehreren Ebenen ändern" />
        <Columns $h={191}>
          <LeftCol>
            <ColLabel $mt={6}>Klicken Sie auf die Ebene, um sie zu <u>ä</u>ndern:</ColLabel>
            <InlineRow $mt={1}>
              <ListBox>
                <ListItems>
                  {[1, 2, 3, 4, 5, 6, 7, 8, 9].map(n => <ListItem key={n} $sel={n === 1}>{n}</ListItem>)}
                </ListItems>
                <ListScroll>
                  <svg width="9" height="5" viewBox="0 0 9 5"><path d="M.5 4.500l4-4 4 4" fill="none" stroke="#b5b5b5" /></svg>
                  <svg width="9" height="5" viewBox="0 0 9 5"><path d="M.5.5l4 4 4-4" fill="none" stroke="#b5b5b5" /></svg>
                </ListScroll>
              </ListBox>
              <PreviewBox $w={581} $h={165} $m="0 0 0 9px" $pad="9px 8px 0 0">
                {level2.map(([t, ind, w, dark], i) => (
                  <PreviewRow key={i} $rh={15} $indent={ind} $fs={12}>
                    {t ? <PreviewNum $w={w}>{t}</PreviewNum> : null}
                    <PreviewBar $h={3} $mt={6} $dark={dark} />
                  </PreviewRow>
                ))}
              </PreviewBox>
            </InlineRow>
          </LeftCol>
          <RightCol>
            <ColLabel $mt={7} $off>Änderungen übernehmen für:</ColLabel>
            <Combo $col $mt={1} $off $h={22}>Komplette Liste</Combo>
            <ColLabel $mt={10}><u>V</u>erbinden mit Formatvorlage:</ColLabel>
            <Combo $col $mt={1} $h={20}>(Keine Formatvorlage)</Combo>
            <ColLabel $mt={10} $off>In Katalog anzuzeigende Ebene:</ColLabel>
            <Combo $col $mt={1} $off $h={22}>Ebene 1</Combo>
            <ColLabel $mt={10}>L<u>i</u>stenNr-Feldliste:</ColLabel>
            <TextInput $col $mt={1} $h={20} />
          </RightCol>
        </Columns>
        <Section>Zahlenformat</Section>
        <Columns $h={95}>
          <LeftCol>
            <ColLabel $mt={4}>F<u>o</u>rmatierung für Zahl eingeben:</ColLabel>
            <InlineRow $mt={1}>
              <TextInput $w={547} $h={20}><Selected>1</Selected>)</TextInput>
              <Button $w={74} $h={22} $ml={9}><span><u>S</u>chriftart...</span></Button>
            </InlineRow>
            <InlineRow $mt={3}>
              <ColLabel $w={320}>Za<u>h</u>lenformatvorlage für diese Ebene:</ColLabel>
              <ColLabel $off>Ebenennummer einschließen aus:</ColLabel>
            </InlineRow>
            <InlineRow $mt={1}>
              <Combo $w={311}>1, 2, 3, ...</Combo>
              <Combo $w={311} $ml={9} $off />
            </InlineRow>
          </LeftCol>
          <RightCol>
            <InlineRow $mt={6}>
              <Label $w={80}><u>B</u>eginnen mit:</Label>
              <Spin $w={59} value="1" />
            </InlineRow>
            <CheckRow $mt={3} $off><CheckBox $off /><CheckText>Liste neu beginnen nach:</CheckText></CheckRow>
            <Combo $col $mt={3} $ml={20} $off />
            <CheckRow $mt={3}><CheckBox /><CheckText><u>N</u>ummerieren nach Norm</CheckText></CheckRow>
          </RightCol>
        </Columns>
        <Section>Position</Section>
        <Columns $h={96}>
          <LeftCol>
            <InlineRow $mt={5}>
              <Label $w={109}><u>Z</u>ahlenausrichtung:</Label>
              <Combo $w={91}>Links</Combo>
              <Label $w={75} $ml={10}><u>A</u>usrichtung:</Label>
              <Spin $w={89} value="0 cm" />
            </InlineRow>
            <InlineRow $mt={4}>
              <Label $w={109}>Texteinzu<u>g</u> bei:</Label>
              <Spin $w={89} value="0,63 cm" />
              <Button $w={157} $h={22} $ml={12} $mt={-1} $focus><span><u>F</u>ür alle Ebenen festlegen...</span></Button>
            </InlineRow>
          </LeftCol>
          <RightCol>
            <ColLabel $mt={4}>Text <u>d</u>anach:</ColLabel>
            <Combo $col $mt={1}>Tabstoppzeichen</Combo>
            <CheckRow $mt={3}><CheckBox /><CheckText><u>T</u>abstopp hinzufügen bei:</CheckText></CheckRow>
            <Spin $w={89} $ml={18} $mt={3} $off value="0,63 cm" />
          </RightCol>
        </Columns>
        <Footer $mt={0} $mr={7}>
          <Button $w={94}><span>&lt;&lt; <u>R</u>eduzieren</span></Button>
          <Grow />
          <Button $w={74}>OK</Button>
          <Button $w={74} $ml={10}>Abbrechen</Button>
        </Footer>
      </Dialog>

      {/* dialog 3 */}
      <Dialog $x={1123} $y={778} $w={356} $h={153} $edge="#777">
        <Title text="Für alle Ebenen festlegen" active />
        <SetRow $mt={7}><Label><u>A</u>ufzählungszeichen-/Zahlenposition für erste Ebene:</Label><Spin $w={59} $h={19} value="0 cm" /></SetRow>
        <SetRow $mt={4}><Label><u>T</u>extposition für erste Ebene:</Label><Spin $w={59} $h={19} value="0,63 cm" /></SetRow>
        <SetRow $mt={20}><Label><u>Z</u>usätzlicher Einzug für jede Ebene:</Label><Spin $w={59} $h={19} value="0,63 cm" /></SetRow>
        <SetFooter>
          <Button $w={73} $h={22} $hot>OK</Button>
          <Button $w={74} $h={22} $ml={11}>Abbrechen</Button>
        </SetFooter>
        <CursorMark width="15" height="21" viewBox="0 0 15 21"><path d="M1 1v16l4-3.5 3 6.5 3-1.300-3-6.200h5.500z" fill="#fff" stroke="#333" /></CursorMark>
      </Dialog>
    </Root>
  );
}
